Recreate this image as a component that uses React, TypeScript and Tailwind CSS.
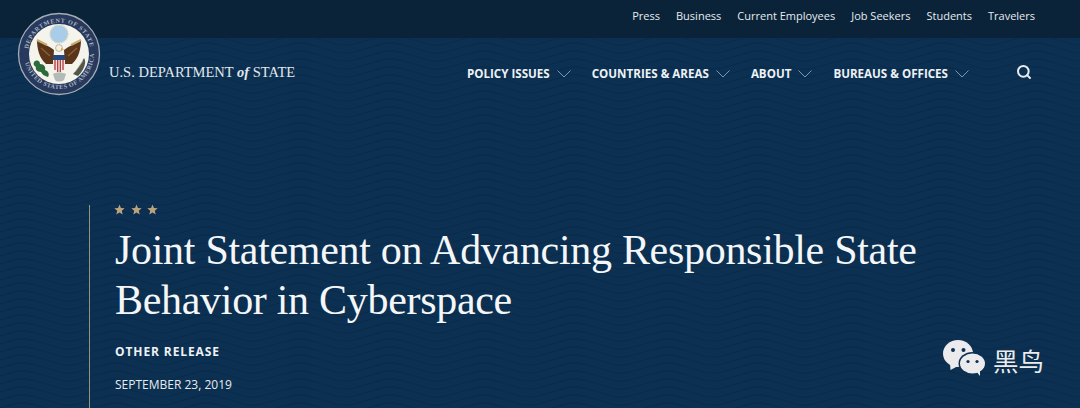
import { Search } from "lucide-react";

const utilityLinks = ["Press", "Business", "Current Employees", "Job Seekers", "Students", "Travelers"];
const mainLinks = ["POLICY ISSUES", "COUNTRIES & AREAS", "ABOUT", "BUREAUS & OFFICES"];
const waveRows = [-8, 0, 8, 16];

const Seal = () => (
  <svg viewBox="0 0 84 84" className="h-[84px] w-[84px]">
    <defs>
      <path id="sealTop" d="M 11 42 A 31.5 31.5 0 0 1 74 42" />
      <path id="sealBottom" d="M 7 42 A 35 35 0 0 0 77 42" />
    </defs>
    <circle cx="42" cy="42" r="40.5" fill="#27395c" stroke="#a4adb5" strokeWidth="1.3" />
    <circle cx="42" cy="42" r="30" fill="#f4f3ec" />
    <text fontSize="6.2" fill="#aeb8c4" fontFamily="Liberation Serif, serif" fontWeight="bold" letterSpacing="0.7">
      <textPath href="#sealTop" startOffset="5%">DEPARTMENT OF STATE</textPath>
    </text>
    <text fontSize="6.2" fill="#aeb8c4" fontFamily="Liberation Serif, serif" fontWeight="bold" letterSpacing="0.5">
      <textPath href="#sealBottom" startOffset="8%">UNITED STATES OF AMERICA</textPath>
    </text>
    {/* glory */}
    <circle cx="42" cy="22" r="8.8" fill="#a9cde8" stroke="#c9cdc5" strokeWidth="1.5" strokeDasharray="1 0.8" />
    {/* wings */}
    <path d="M37 38 C32 34 26 32 20 28 C20 36 22 46 29 52 L36 52 Z" fill="#5b3519" />
    <path d="M47 38 C52 34 58 32 64 28 C64 36 62 46 55 52 L48 52 Z" fill="#5b3519" />
    <path d="M20 28 L30 33 M64 28 L54 33" stroke="#c8ab6e" strokeWidth="2" />
    <path d="M24 36 L33 44 M60 36 L51 44" stroke="#8a6238" strokeWidth="1.2" />
    {/* head */}
    <circle cx="42" cy="36" r="3.4" fill="#f3f1e6" stroke="#8b7a58" strokeWidth="0.5" />
    <path d="M44 36 L47 37.4 L44 38.4 Z" fill="#d6a63e" />
    {/* shield */}
    <path d="M36 43 H48 V53 C48 57 45 59 42 61 C39 59 36 57 36 53 Z" fill="#f4e8de" />
    <path d="M36 43 H48 V48 H36 Z" fill="#25497c" />
    <path d="M38 48 V58 M40.7 48 V60 M43.3 48 V60 M46 48 V58" stroke="#b3393f" strokeWidth="1.3" />
    {/* olive branch */}
    <path d="M17 50 C20 47 23 49 23 52 C27 52 29 55 28 58 C31 59 33 62 31 65 C27 64 25 62 24 60 C20 60 18 57 19 55 C17 54 16 52 17 50 Z" fill="#2c6b3a" />
    {/* arrows */}
    <path d="M56 62 C60 58 64 52 67 46 C70 50 67 58 61 64 Z" fill="#55564a" />
    <path d="M58 60 L66 49" stroke="#a9a692" strokeWidth="0.8" />
    {/* motto ribbon */}
    <path d="M36 62 C39 60 45 60 49 62 L47 68 C44 70 40 70 38 68 Z" fill="#b4bab5" />
  </svg>
);

const WeChat = () => (
  <svg viewBox="0 0 42 36" className="h-[36px] w-[42px]">
    <ellipse cx="15" cy="13.5" rx="15" ry="13.5" fill="#ebebed" />
    <path d="M7 23 L7.5 30 L15 26 Z" fill="#ebebed" />
    <ellipse cx="29.5" cy="23.5" rx="14" ry="11.5" fill="#0b3052" />
    <ellipse cx="29.5" cy="23.5" rx="12.5" ry="10" fill="#ebebed" />
    <path d="M33 31 L37 36 L37 29 Z" fill="#ebebed" />
    <circle cx="10" cy="10" r="2" fill="#0b3052" />
    <circle cx="20.5" cy="10" r="2" fill="#0b3052" />
    <circle cx="25" cy="21.5" r="1.6" fill="#0b3052" />
    <circle cx="34" cy="21.5" r="1.6" fill="#0b3052" />
  </svg>
);

const Star = () => (
  <svg viewBox="0 0 20 20" className="h-[11px] w-[11px] fill-[#bda27e]">
    <polygon points="10,1 12.6,7.2 19.4,7.8 14.2,12.2 15.8,18.9 10,15.4 4.2,18.9 5.8,12.2 0.6,7.8 7.4,7.2" />
  </svg>
);

const Chevron = () => (
  <svg viewBox="0 0 14 8" className="h-[8px] w-[14px]" fill="none" stroke="#7f95a9" strokeWidth="1">
    <path d="M0.5 0.5 L7 7 L13.5 0.5" />
  </svg>
);

const App = () => {
  return (
    <div className="relative h-[408px] w-[1080px] overflow-hidden bg-[#0b3052] font-['Open_Sans',sans-serif] text-white">
      {/* wave texture behind the page */}
      <svg className="absolute inset-0 h-full w-full" aria-hidden="true">
        <defs>
          <pattern id="waves" width="92" height="8" patternUnits="userSpaceOnUse">
            {waveRows.map((y) => (
              <path
                key={y}
                d={`M0 ${y} C23 ${y - 7} 23 ${y - 7} 46 ${y} C69 ${y + 7} 69 ${y + 7} 92 ${y}`}
                fill="none"
                stroke="#0a2b4b"
                strokeWidth="1.3"
              />
            ))}
          </pattern>
        </defs>
        <rect width="1080" height="408" fill="url(#waves)" />
      </svg>

      <div className="relative flex h-[38px] items-center justify-end gap-[16px] bg-[#0a2339] pb-[6px] pr-[45px] text-[11px] text-[#e6ebef]">
        {utilityLinks.map((link) => (
          <span key={link}>{link}</span>
        ))}
      </div>

      <header className="relative flex h-[70px] items-center justify-between pl-[109px] pr-[48px]">
        <div className="mt-[-1px] font-['Liberation_Serif',serif] text-[14.5px] text-[#e2e8ec]">
          U.S. DEPARTMENT <i className="font-bold">of</i> STATE
        </div>
        <div className="flex items-center">
          <nav className="mt-[2px] flex items-center gap-[21px] text-[11.6px] font-bold text-[#eef2f5]">
            {mainLinks.map((link) => (
              <div key={link} className="flex items-center gap-[7px]">
                <span>{link}</span>
                <Chevron />
              </div>
            ))}
          </nav>
          <Search className="ml-[47px] h-[16px] w-[16px] -translate-y-[1px] text-[#e6ebef]" strokeWidth={3} />
        </div>
      </header>

      <main className="relative ml-[89px] mt-[97px] flex h-[203px] flex-col border-l border-[#97937d] pl-[24px]">
        <div className="-mt-[1px] flex gap-[5.5px]">
          <Star />
          <Star />
          <Star />
        </div>
        <h1 className="mt-[10px] w-[860px] pl-[1px] font-['Liberation_Serif',serif] text-[42px] font-normal leading-[50px] tracking-[-0.3px] text-[#f4f6f8]">
          Joint Statement on Advancing Responsible State
          <br />
          Behavior in Cyberspace
        </h1>
        <div className="mt-[18px] pl-[1px] text-[12px] font-bold tracking-[0.9px] text-[#eef2f5]">OTHER RELEASE</div>
        <div className="mt-[15px] pl-[1px] text-[12px] text-[#e6ebef]">SEPTEMBER 23, 2019</div>
      </main>

      <div className="absolute left-[943px] top-[340px] flex items-center gap-[8px]">
        <WeChat />
        <span className="mt-[3px] font-['Noto_Sans_CJK_SC',sans-serif] text-[25.5px] leading-none text-[#ececec]">黑鸟</span>
      </div>

      {/* seal hangs over the top bar and header */}
      <div className="absolute left-[17px] top-[12px]">
        <Seal />
      </div>
    </div>
  );
};

export default App;
